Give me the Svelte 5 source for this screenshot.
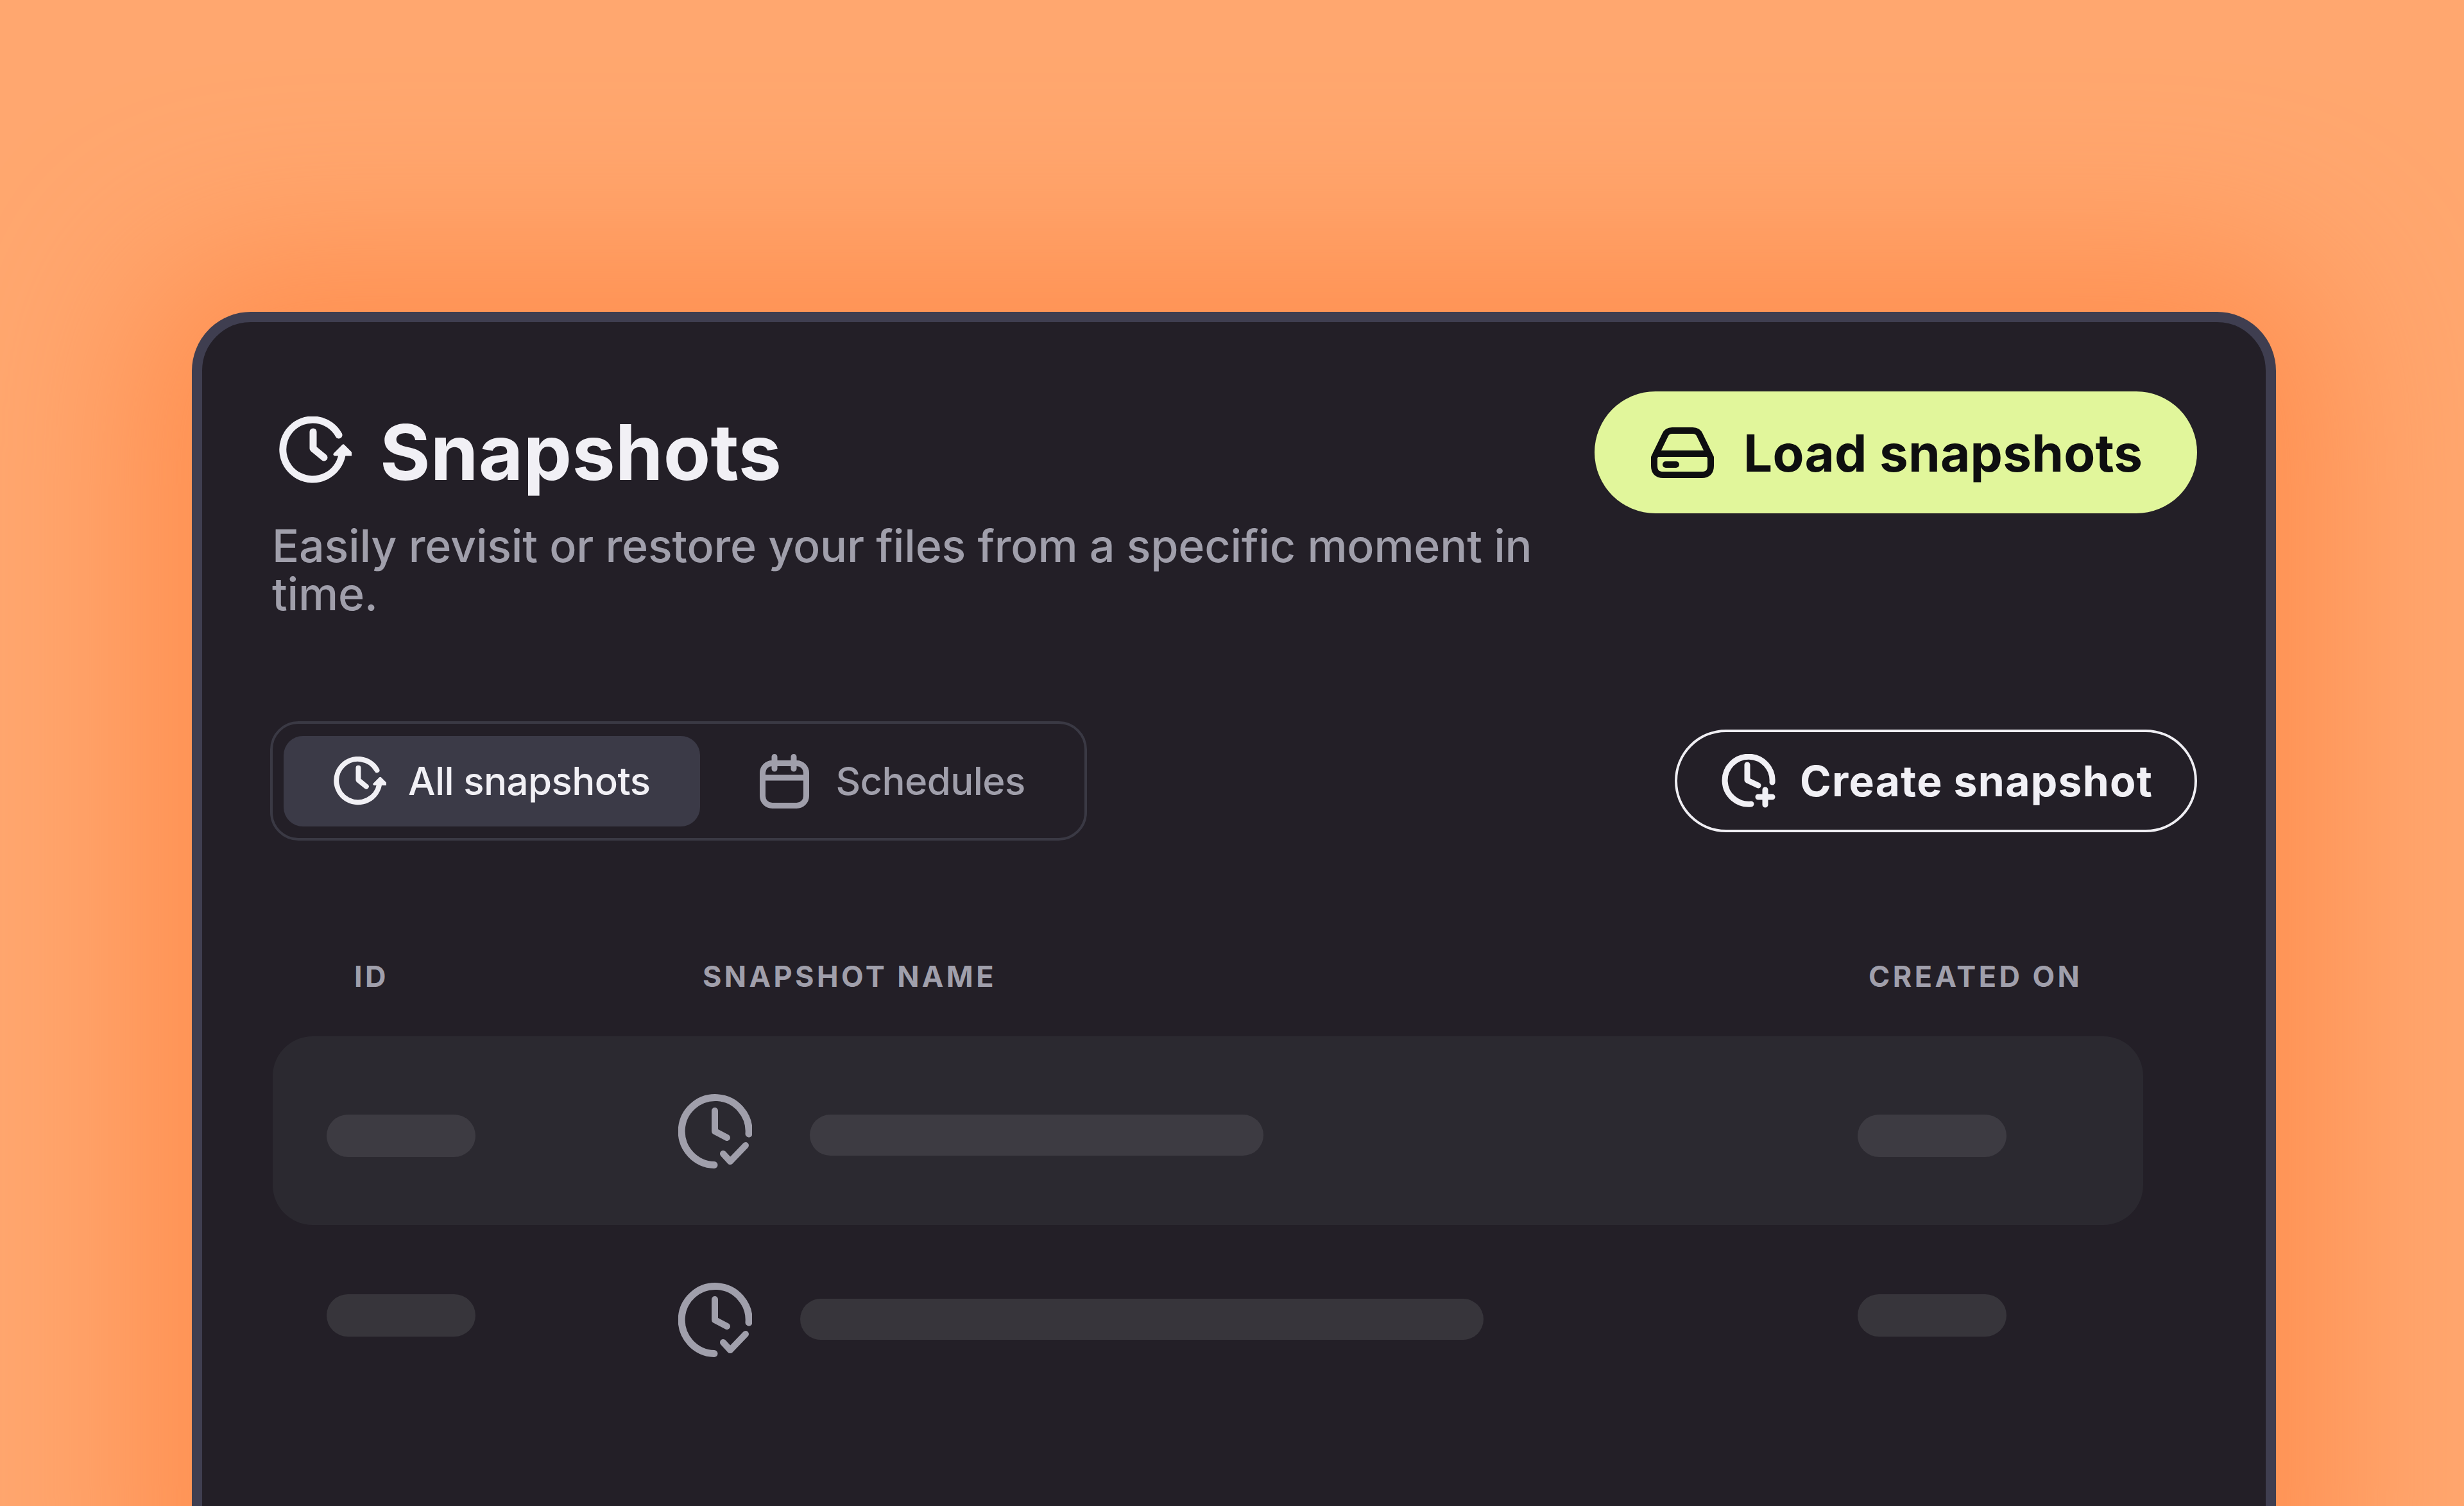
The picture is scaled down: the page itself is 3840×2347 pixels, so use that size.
<script>
  const rows = [
    { cls: 'first', barWidth: 707 },
    { cls: 'second', barWidth: 1065 }
  ];
</script>

<svelte:head><title>Snapshots</title></svelte:head>

{#snippet refreshClock(cls)}
  <svg class={cls} viewBox="15 13 113 104" fill="none" stroke="currentColor" stroke-width="11" stroke-linecap="round" stroke-linejoin="round">
    <path d="M108 42A46.5 46.5 0 1 0 113 73" />
    <path d="M115 59L102 72H128Z" fill="currentColor" stroke-width="5" />
    <path d="M68 37V63L85 77" />
  </svg>
{/snippet}

<div class="page">
  <section class="card">
    <header class="top">
      <div class="intro">
        <div class="title-row">
          {@render refreshClock('title-icon')}
          <h1>Snapshots</h1>
        </div>
        <p>Easily revisit or restore your files from a specific moment in time.</p>
      </div>
      <button class="load">
        <svg class="load-icon" viewBox="14 65 98 79" fill="none" stroke="currentColor" stroke-width="10" stroke-linecap="round" stroke-linejoin="round">
          <path d="M19 112V125Q19 139 33 139H93Q107 139 107 125V112L90 77Q87 70 79 70H47Q39 70 36 77Z" />
          <path d="M22 106H104" />
          <path d="M37 123H53" />
        </svg>
        Load snapshots
      </button>
    </header>

    <div class="toolbar">
      <div class="tabs">
        <div class="tab active">
          {@render refreshClock('tab-icon')}
          All snapshots
        </div>
        <div class="tab">
          <svg class="cal-icon" viewBox="15 13 77 85" fill="none" stroke="currentColor" stroke-width="9" stroke-linecap="round">
            <rect x="19.5" y="27.5" width="68" height="66" rx="15" />
            <path d="M20 50H87M38 17.5V36M68 17.5V36" />
          </svg>
          Schedules
        </div>
      </div>
      <button class="create">
        <svg class="create-icon" viewBox="13 16 84 84" fill="none" stroke="currentColor" stroke-width="9" stroke-linecap="round" stroke-linejoin="round">
          <path d="M92 60A37 37 0 1 0 59 94" />
          <path d="M53 33V57L70 65" />
          <path d="M70 83H92M81 72V95" />
        </svg>
        Create snapshot
      </button>
    </div>

    <div class="table">
      <div class="grid head">
        <span class="h-id">ID</span>
        <span class="h-name">SNAPSHOT NAME</span>
        <span class="h-date">CREATED ON</span>
      </div>
      {#each rows as row}
        <div class="grid row {row.cls}">
          <div class="pill"></div>
          <div class="name">
            <svg class="check-icon" viewBox="57 44 115 117" fill="none" stroke="currentColor" stroke-width="11" stroke-linecap="round" stroke-linejoin="round">
              <path d="M167 107A52.5 52.5 0 1 0 113 155.500" />
              <path d="M114 71V103L133 113" stroke-width="10" />
              <path d="M127 138L138 150L162 125" stroke-width="10" />
            </svg>
            <div class="bar" style="width: {row.barWidth}px"></div>
          </div>
          <div class="pill"></div>
        </div>
      {/each}
    </div>
  </section>
</div>

<style>
  :global(body) {
    margin: 0;
    background: #ffa76f;
  }
  .page {
    width: 3840px;
    height: 2347px;
    overflow: hidden;
    padding: 486px 0 0 299px;
    box-sizing: border-box;
    font-family: Inter, "Liberation Sans", sans-serif;
  }
  .card {
    width: 3248px;
    height: 2100px;
    box-sizing: border-box;
    padding: 108px 107px 0 109px;
    background: #231f27;
    border: 16px solid #3f3e50;
    border-radius: 92px;
    box-shadow: 0 0 400px 90px #ff8f50;
  }
  .top {
    display: flex;
    justify-content: space-between;
    align-items: flex-start;
    height: 514px;
  }
  .intro {
    width: 2010px;
  }
  .title-row {
    display: flex;
    align-items: center;
    gap: 44px;
    height: 190px;
    padding-left: 11px;
  }
  .title-icon {
    width: 113px;
    height: 104px;
    margin-top: -8px;
    color: #f1f0f5;
  }
  h1 {
    margin: 0;
    font-size: 120px;
    line-height: 1;
    font-weight: 700;
    letter-spacing: 0.2px;
    color: #f1f0f5;
  }
  .intro p {
    margin: 13px 0 0;
    font-size: 70px;
    line-height: 75px;
    font-weight: 500;
    letter-spacing: -0.22px;
    color: #a09fab;
  }
  button {
    font-family: inherit;
    cursor: pointer;
    display: flex;
    align-items: center;
    box-sizing: border-box;
  }
  .load {
    height: 190px;
    width: 939px;
    padding: 0 0 0 88px;
    gap: 46px;
    border: 0;
    border-radius: 95px;
    background: #e1f69b;
    color: #0e0e10;
    font-size: 80px;
    font-weight: 700;
    letter-spacing: 0.2px;
    white-space: nowrap;
  }
  .load-icon {
    width: 98px;
    height: 79px;
  }
  .toolbar {
    display: flex;
    justify-content: space-between;
    align-items: center;
  }
  .tabs {
    display: flex;
    align-items: center;
    gap: 36px;
    width: 1273px;
    height: 186px;
    margin-left: -3px;
    box-sizing: border-box;
    padding: 0 17px;
    border: 4px solid #3a3944;
    border-radius: 44px;
  }
  .tab {
    display: flex;
    align-items: center;
    height: 141px;
    padding: 0 78px;
    gap: 34px;
    box-sizing: border-box;
    border-radius: 30px;
    font-size: 60px;
    font-weight: 500;
    letter-spacing: -0.6px;
    color: #a09fab;
    white-space: nowrap;
  }
  .tab.active {
    width: 650px;
    background: #3b3a47;
    color: #f1f0f5;
  }
  .tab:not(.active) {
    padding-left: 57px;
    gap: 41px;
  }
  .tab-icon {
    width: 82px;
    height: 76px;
  }
  .cal-icon {
    width: 77px;
    height: 85px;
  }
  .create {
    height: 160px;
    width: 814px;
    padding: 0 0 0 69px;
    gap: 38px;
    border: 4px solid #efeef3;
    border-radius: 80px;
    background: transparent;
    color: #f1f0f5;
    font-size: 66px;
    font-weight: 700;
    letter-spacing: 1.25px;
    white-space: nowrap;
  }
  .create-icon {
    width: 84px;
    height: 84px;
  }
  .table {
    width: 2915px;
    margin: 184px 0 0 1px;
  }
  .grid {
    display: grid;
    grid-template-columns: 548px 1838px 1fr;
    padding-left: 84px;
    box-sizing: border-box;
    align-items: center;
  }
  .head {
    height: 33px;
    margin-bottom: 88px;
    font-size: 45px;
    font-weight: 700;
    letter-spacing: 4.4px;
    color: #a09fab;
  }
  .h-id {
    margin-left: 43px;
  }
  .h-name {
    margin-left: 38px;
  }
  .h-date {
    margin-left: 17px;
    white-space: nowrap;
  }
  .row {
    height: 294px;
  }
  .row.first {
    background: #2b2930;
    border-radius: 62px;
  }
  .name {
    display: flex;
    align-items: center;
  }
  .check-icon {
    width: 115px;
    height: 117px;
    color: #a09fab;
    flex: none;
  }
  .pill {
    width: 232px;
    height: 66px;
    border-radius: 33px;
    background: #3d3b42;
  }
  .bar {
    height: 64px;
    border-radius: 32px;
    background: #3d3b42;
  }
  .first > .pill {
    margin-top: 16px;
  }
  .first .bar {
    margin: 13px 0 0 90px;
  }
  .second > .pill {
    margin-top: -13px;
    background: #37353b;
  }
  .second .bar {
    margin: 0 0 0 75px;
    background: #37353b;
  }
</style>
